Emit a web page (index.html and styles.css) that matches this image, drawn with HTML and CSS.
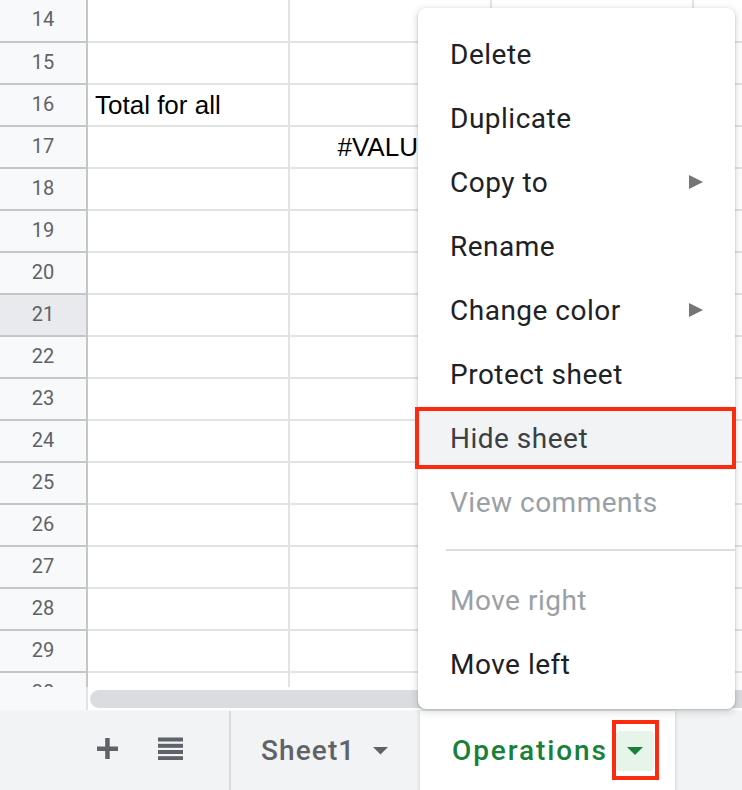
FILE: index.html
```html
<!DOCTYPE html>
<html>
<head>
<meta charset="utf-8">
<link rel="stylesheet" href="styles.css">
</head>
<body>
<div class="app">
  <div class="sheet">
    <div class="row"><div class="rh">14</div><div class="c"></div><div class="c"></div><div class="c"></div><div class="c"></div></div>
    <div class="row"><div class="rh">15</div><div class="c"></div><div class="c"></div><div class="c"></div><div class="c"></div></div>
    <div class="row"><div class="rh">16</div><div class="c txt">Total for all</div><div class="c"></div><div class="c"></div><div class="c"></div></div>
    <div class="row"><div class="rh">17</div><div class="c"></div><div class="c txt center">#VALUE!</div><div class="c"></div><div class="c"></div></div>
    <div class="row"><div class="rh">18</div><div class="c"></div><div class="c"></div><div class="c"></div><div class="c"></div></div>
    <div class="row"><div class="rh">19</div><div class="c"></div><div class="c"></div><div class="c"></div><div class="c"></div></div>
    <div class="row"><div class="rh">20</div><div class="c"></div><div class="c"></div><div class="c"></div><div class="c"></div></div>
    <div class="row"><div class="rh sel">21</div><div class="c"></div><div class="c"></div><div class="c"></div><div class="c"></div></div>
    <div class="row"><div class="rh">22</div><div class="c"></div><div class="c"></div><div class="c"></div><div class="c"></div></div>
    <div class="row"><div class="rh">23</div><div class="c"></div><div class="c"></div><div class="c"></div><div class="c"></div></div>
    <div class="row"><div class="rh">24</div><div class="c"></div><div class="c"></div><div class="c"></div><div class="c"></div></div>
    <div class="row"><div class="rh">25</div><div class="c"></div><div class="c"></div><div class="c"></div><div class="c"></div></div>
    <div class="row"><div class="rh">26</div><div class="c"></div><div class="c"></div><div class="c"></div><div class="c"></div></div>
    <div class="row"><div class="rh">27</div><div class="c"></div><div class="c"></div><div class="c"></div><div class="c"></div></div>
    <div class="row"><div class="rh">28</div><div class="c"></div><div class="c"></div><div class="c"></div><div class="c"></div></div>
    <div class="row"><div class="rh">29</div><div class="c"></div><div class="c"></div><div class="c"></div><div class="c"></div></div>
    <div class="row"><div class="rh">30</div><div class="c"></div><div class="c"></div><div class="c"></div><div class="c"></div></div>
  </div>
  <div class="hscroll">
    <div class="corner"></div>
    <div class="thumb"></div>
  </div>
  <div class="tabbar">
    <div class="tools">
      <svg class="ic-plus" width="21" height="21" viewBox="0 0 21 21"><rect x="0" y="8.5" width="21" height="4.5" fill="#5f6368"/><rect x="8.2" y="0" width="4.5" height="21" fill="#5f6368"/></svg>
      <svg class="ic-list" width="25" height="23" viewBox="0 0 25 23"><rect x="0" y="0.5" width="25" height="4" fill="#5f6368"/><rect x="0" y="6.8" width="25" height="4" fill="#5f6368"/><rect x="0" y="13" width="25" height="4" fill="#5f6368"/><rect x="0" y="19.2" width="25" height="4" fill="#5f6368"/></svg>
    </div>
    <div class="tab">
      <span class="tab-name">Sheet1</span>
      <svg class="tab-caret" width="15" height="8" viewBox="0 0 15 8"><polygon points="0,0 15,0 7.5,7.5" fill="#5f6368"/></svg>
    </div>
    <div class="tab active">
      <span class="tab-name">Operations</span>
      <span class="dd">
        <svg width="16" height="8" viewBox="0 0 16 8"><polygon points="0,0 16,0 8,8" fill="#188038"/></svg>
        <span class="annot annot-dd"></span>
      </span>
    </div>
  </div>

  <div class="menu">
    <div class="mi">Delete</div>
    <div class="mi">Duplicate</div>
    <div class="mi">Copy to<svg class="sub" width="14" height="14" viewBox="0 0 14 14"><polygon points="0,0 14,7 0,14" fill="#757575"/></svg></div>
    <div class="mi">Rename</div>
    <div class="mi">Change color<svg class="sub" width="14" height="14" viewBox="0 0 14 14"><polygon points="0,0 14,7 0,14" fill="#757575"/></svg></div>
    <div class="mi">Protect sheet</div>
    <div class="mi hover">Hide sheet<span class="annot annot-mi"></span></div>
    <div class="mi dis">View comments</div>
    <div class="sep"></div>
    <div class="mi dis">Move right</div>
    <div class="mi">Move left</div>
  </div>
</div>
</body>
</html>
```
FILE: styles.css
```css
* { box-sizing: border-box; }
html, body { margin: 0; padding: 0; background: #fff; }
.app {
  position: relative;
  width: 742px;
  height: 790px;
  overflow: hidden;
  display: flex;
  flex-direction: column;
  font-family: Roboto, "Liberation Sans", sans-serif;
}
.sheet {
  height: 687px;
  flex: none;
  overflow: hidden;
}
.row {
  display: flex;
  height: 42px;
}
.row:first-child { height: 43px; }
.rh {
  width: 88px;
  flex: none;
  background: #f8f9fa;
  border-right: 2px solid #c4c6c8;
  border-bottom: 2px solid #c4c6c8;
  display: flex;
  align-items: center;
  justify-content: center;
  padding-bottom: 3px;
  font-size: 20px;
  color: #5f6368;
}
.rh.sel { background: #e8eaed; }
.c {
  width: 202px;
  flex: none;
  border-right: 2px solid #e2e3e3;
  border-bottom: 2px solid #e2e3e3;
}
.c.txt {
  display: flex;
  align-items: flex-end;
  padding: 0 0 5px 7px;
  font-family: "Liberation Sans", Arial, sans-serif;
  font-size: 26px;
  line-height: 30px;
  color: #000;
  white-space: nowrap;
}
.c.txt.center { justify-content: center; padding-left: 0; }

.hscroll {
  height: 23px;
  flex: none;
  display: flex;
  background: #fff;
}
.corner {
  width: 88px;
  flex: none;
  background: #f8f9fa;
  border-right: 2px solid #e3e4e5;
}
.thumb {
  flex: 1;
  margin: 3px 0 2px 2px;
  background: #dadce0;
  border-radius: 9px 0 0 9px;
}

.tabbar {
  height: 80px;
  flex: none;
  display: flex;
  background: #f1f3f4;
  border-top: 1px solid #f6f7f8;
}
.tools {
  width: 231px;
  flex: none;
  display: flex;
  align-items: center;
  gap: 40px;
  padding: 0 0 4px 97px;
  border-right: 2px solid #dadce0;
}
.tab {
  display: flex;
  align-items: center;
  width: 189px;
  flex: none;
  padding-left: 30px;
  font-size: 28px;
  font-weight: 500;
  letter-spacing: 1.1px;
  color: #5f6368;
}
.tab-caret { margin-left: 18px; margin-top: 1px; }
.tab.active {
  width: 255px;
  padding-left: 32px;
  background: #fff;
  color: #188038;
  letter-spacing: 1.9px;
  box-shadow: 0 1px 3px 1px rgba(60, 64, 67, 0.15);
}
.dd {
  position: relative;
  width: 38px;
  height: 40px;
  margin-left: 8px;
  border-radius: 4px;
  background: #e6f4ea;
  display: flex;
  align-items: center;
  justify-content: center;
}
.annot {
  position: absolute;
  border: 4px solid #fb2b10;
  pointer-events: none;
}
.annot-dd { left: -4px; right: -5px; top: -11px; bottom: -9px; }

.menu {
  position: absolute;
  left: 418px;
  top: 8px;
  width: 317px;
  height: 701px;
  padding: 14px 0 13px;
  background: #fff;
  border-radius: 8px;
  box-shadow: 0 2px 6px 2px rgba(60, 64, 67, 0.15), 0 1px 2px rgba(60, 64, 67, 0.3);
}
.mi {
  position: relative;
  height: 64px;
  display: flex;
  align-items: center;
  justify-content: space-between;
  padding: 0 32px 0 32px;
  font-size: 28px;
  letter-spacing: 0.5px;
  color: #202124;
  white-space: nowrap;
}
.mi.hover { background: #f1f3f4; color: #3c4043; }
.mi.dis { color: #9aa0a6; }
.annot-mi { left: -3px; right: -1px; top: 1px; bottom: 1px; }
.sep {
  height: 34px;
  display: flex;
  align-items: center;
  padding-left: 28px;
  padding-bottom: 2px;
}
.sep::before {
  content: "";
  flex: 1;
  height: 2px;
  background: #dadce0;
}
```
